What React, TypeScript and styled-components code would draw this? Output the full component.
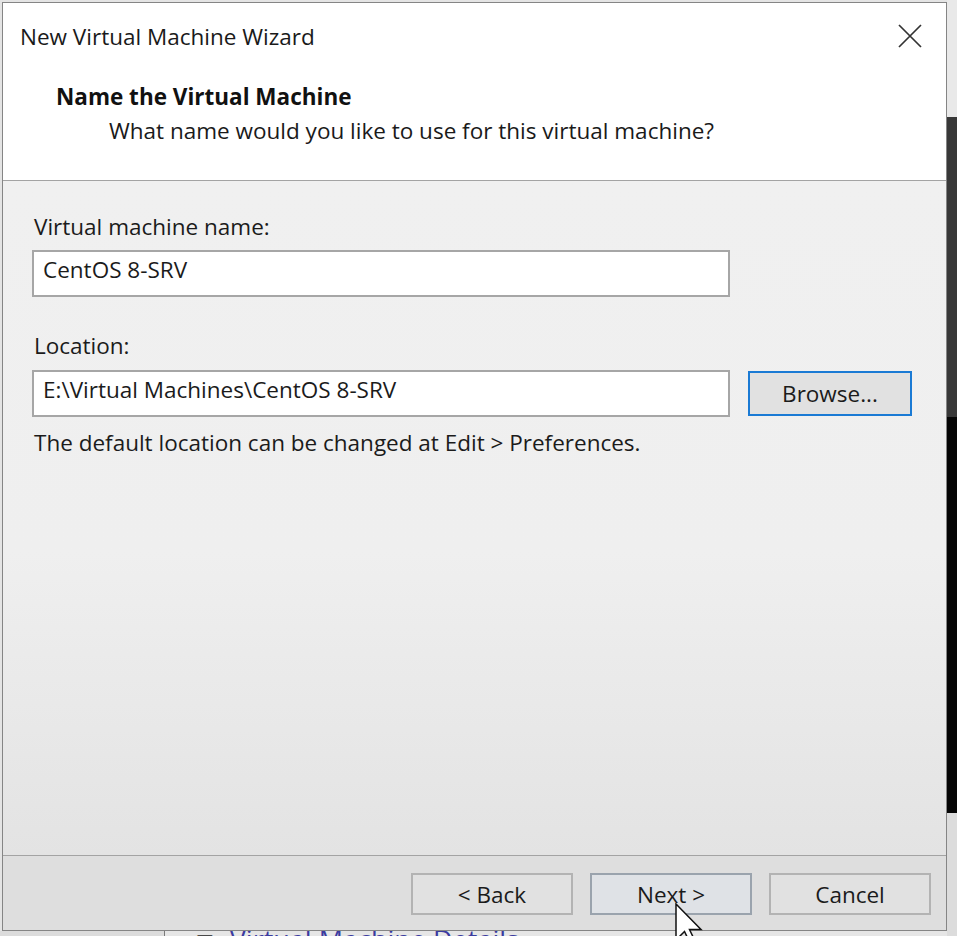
import React from "react";
import styled, { createGlobalStyle } from "styled-components";

const GlobalStyle = createGlobalStyle`
  html, body {
    margin: 0;
    padding: 0;
    overflow: hidden;
    background: #e2e2e2;
  }
`;

const FONT = `"Open Sans", "Noto Sans", "Liberation Sans", sans-serif`;

const Desktop = styled.div`
  position: relative;
  width: 957px;
  height: 936px;
  overflow: hidden;
  display: flex;
  font-family: ${FONT};
  color: #1b1b1b;
`;

const MainColumn = styled.div`
  width: 947px;
  display: flex;
  flex-direction: column;
  background: #e4e4e4;
`;

const SideStrip = styled.div`
  flex: 1;
  display: flex;
  flex-direction: column;
`;

const StripBlock = styled.div<{ $h: number; $bg: string }>`
  height: ${(p) => p.$h}px;
  background: ${(p) => p.$bg};
  flex-shrink: 0;
`;

const Dialog = styled.div`
  margin: 2px 0 0 2px;
  width: 945px;
  height: 929px;
  box-sizing: border-box;
  border: 1px solid #858585;
  display: flex;
  flex-direction: column;
  background: #f0f0f0;
  box-shadow: 1px 1px 0 #b8b8b8;
`;

const Header = styled.div`
  height: 178px;
  box-sizing: border-box;
  background: #ffffff;
  border-bottom: 1px solid #a3a3a3;
  display: flex;
  flex-direction: column;
`;

const TitleBar = styled.div`
  height: 68px;
  display: flex;
  align-items: center;
  justify-content: space-between;
  padding: 0 24px 0 17px;
`;

const WindowTitle = styled.div`
  font-size: 22.5px;
  line-height: 30px;
  color: #1a1a1a;
`;

const CloseButton = styled.div`
  width: 24px;
  height: 24px;
  display: flex;
  margin-top: -3px;
`;

const HeadingBlock = styled.div`
  margin-top: 11px;
  padding-left: 53px;
  display: flex;
  flex-direction: column;
  gap: 4px;
`;

const Heading = styled.div`
  font-size: 22.5px;
  line-height: 30px;
  font-weight: 700;
  color: #111;
`;

const SubHeading = styled.div`
  font-size: 22.5px;
  line-height: 30px;
  padding-left: 53px;
  color: #1a1a1a;
`;

const Body = styled.div`
  flex: 1;
  padding: 31px 0 0 29px;
  display: flex;
  flex-direction: column;
  background: linear-gradient(#f0f0f0 0%, #efefef 55%, #e3e3e3 100%);
`;

const FieldLabel = styled.div<{ $gapTop?: number }>`
  font-size: 22.5px;
  line-height: 30px;
  padding-left: 2px;
  margin-top: ${(p) => p.$gapTop ?? 0}px;
`;

const FieldRow = styled.div<{ $gapTop: number }>`
  display: flex;
  align-items: center;
  gap: 18px;
  margin-top: ${(p) => p.$gapTop}px;
`;

const TextBox = styled.div`
  width: 698px;
  height: 47px;
  box-sizing: border-box;
  background: #ffffff;
  border: 2px solid #a6a6a6;
  padding: 0 0 0 9px;
  font-size: 22.5px;
  line-height: 36px;
  display: flex;
  align-items: flex-start;
  color: #1b1b1b;
`;

const PushButton = styled.div<{ $variant?: "focus" | "default" | "plain" }>`
  width: ${(p) => (p.$variant === "focus" ? "164px" : "162px")};
  height: ${(p) => (p.$variant === "focus" ? "45px" : "42px")};
  box-sizing: border-box;
  display: flex;
  align-items: center;
  justify-content: center;
  font-size: 22.5px;
  color: #1b1b1b;
  background: ${(p) => (p.$variant === "default" ? "#dfe2e6" : "#e1e1e1")};
  border: ${(p) =>
    p.$variant === "focus"
      ? "2px solid #1a7ad4"
      : p.$variant === "default"
      ? "2px solid #9aa3ad"
      : "2px solid #b3b3b3"};
`;

const Note = styled.div`
  margin-top: 11px;
  font-size: 22.5px;
  line-height: 30px;
  padding-left: 2px;
`;

const Footer = styled.div`
  height: 75px;
  box-sizing: border-box;
  border-top: 1px solid #a3a3a3;
  background: #dedede;
  display: flex;
  justify-content: flex-end;
  align-items: flex-start;
  gap: 17px;
  padding: 17px 15px 0 0;
`;

const BehindStrip = styled.div`
  height: 5px;
  overflow: hidden;
  display: flex;
  align-items: flex-start;
  background: #e6e6e6;
`;

const BehindPanel = styled.div`
  width: 164px;
  height: 5px;
  border-right: 1px solid #7a7a7a;
  background: #dcdcdc;
  flex-shrink: 0;
`;

const BehindArrow = styled.div`
  margin: -4px 0 0 27px;
  font-size: 26px;
  line-height: 1;
  color: #1e1e1e;
`;

const BehindTitle = styled.div`
  margin: -5px 0 0 12px;
  font-size: 27px;
  line-height: 1;
  color: #3b3ba0;
  white-space: nowrap;
`;

const Pointer = styled.svg`
  position: absolute;
  left: 675px;
  top: 903px;
`;

const CloseIcon = () => (
  <svg width="24" height="24" viewBox="0 0 24 24">
    <path d="M1 1 L23 23 M23 1 L1 23" stroke="#333" strokeWidth="1.7" fill="none" />
  </svg>
);

const App: React.FC = () => {
  return (
    <>
      <GlobalStyle />
      <Desktop>
        <MainColumn>
          <Dialog>
            <Header>
              <TitleBar>
                <WindowTitle>New Virtual Machine Wizard</WindowTitle>
                <CloseButton>
                  <CloseIcon />
                </CloseButton>
              </TitleBar>
              <HeadingBlock>
                <Heading>Name the Virtual Machine</Heading>
                <SubHeading>What name would you like to use for this virtual machine?</SubHeading>
              </HeadingBlock>
            </Header>
            <Body>
              <FieldLabel>Virtual machine name:</FieldLabel>
              <FieldRow $gapTop={8}>
                <TextBox>CentOS 8-SRV</TextBox>
              </FieldRow>
              <FieldLabel $gapTop={34}>Location:</FieldLabel>
              <FieldRow $gapTop={9}>
                <TextBox>E:\Virtual Machines\CentOS 8-SRV</TextBox>
                <PushButton $variant="focus">Browse...</PushButton>
              </FieldRow>
              <Note>The default location can be changed at Edit &gt; Preferences.</Note>
            </Body>
            <Footer>
              <PushButton>&lt; Back</PushButton>
              <PushButton $variant="default">Next &gt;</PushButton>
              <PushButton>Cancel</PushButton>
            </Footer>
          </Dialog>
          <BehindStrip>
            <BehindPanel />
            <BehindArrow>▼</BehindArrow>
            <BehindTitle>Virtual Machine Details</BehindTitle>
          </BehindStrip>
        </MainColumn>
        <SideStrip>
          <StripBlock $h={117} $bg="#e9e9e9" />
          <StripBlock $h={300} $bg="#383838" />
          <StripBlock $h={396} $bg="#050505" />
          <StripBlock $h={123} $bg="#dcdcdc" />
        </SideStrip>
        <Pointer width="30" height="40" viewBox="0 0 30 40">
          <path
            d="M1 1 L1 37 L9.5 28.5 L16 42 L21 40 L14.5 26.5 L26 26.5 Z"
            fill="#ffffff"
            stroke="#111"
            strokeWidth="1.5"
            strokeLinejoin="miter"
          />
        </Pointer>
      </Desktop>
    </>
  );
};

export default App;
